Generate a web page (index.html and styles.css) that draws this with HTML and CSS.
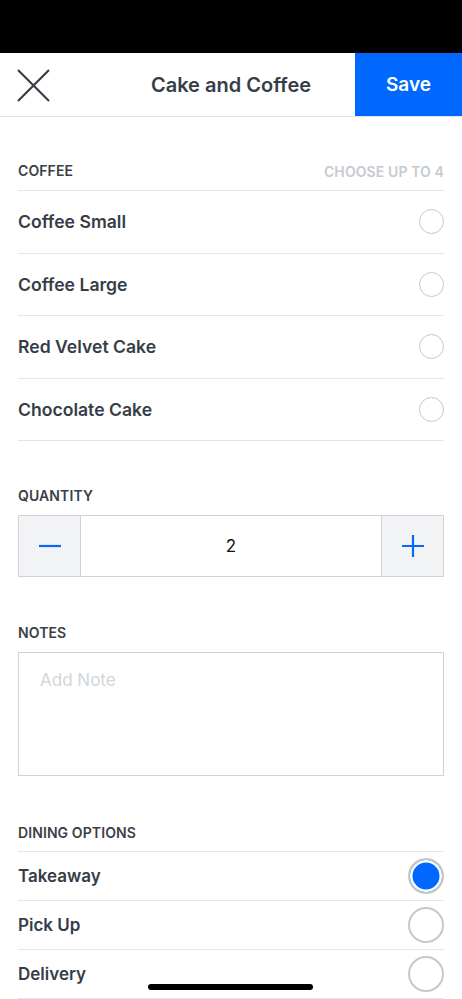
FILE: index.html
```html
<!DOCTYPE html>
<html lang="en">
<head>
<meta charset="utf-8">
<title>Cake and Coffee</title>
<link rel="stylesheet" href="styles.css">
</head>
<body>
<div class="screen">
  <div class="status-bar"></div>
  <header class="nav">
    <button class="close" aria-label="Close">
      <svg width="33" height="33" viewBox="0 0 33 33"><path d="M1 1 L32 32 M32 1 L1 32" stroke="#3a4049" stroke-width="2.2" fill="none"/></svg>
    </button>
    <h1 class="title">Cake and Coffee</h1>
    <button class="save">Save</button>
  </header>

  <main class="content">
    <section class="group group-coffee">
      <div class="group-head">
        <span class="label">COFFEE</span>
        <span class="hint">CHOOSE UP TO 4</span>
      </div>
      <ul class="list">
        <li class="row"><span>Coffee Small</span><span class="radio"></span></li>
        <li class="row"><span>Coffee Large</span><span class="radio"></span></li>
        <li class="row"><span>Red Velvet Cake</span><span class="radio"></span></li>
        <li class="row"><span>Chocolate Cake</span><span class="radio"></span></li>
      </ul>
    </section>

    <section class="group group-qty">
      <div class="label plain">QUANTITY</div>
      <div class="stepper">
        <button class="step" aria-label="Decrease">
          <svg width="22" height="22" viewBox="0 0 22 22"><path d="M0 11 H22" stroke="#0a66f5" stroke-width="2.2"/></svg>
        </button>
        <div class="value">2</div>
        <button class="step" aria-label="Increase">
          <svg width="22" height="22" viewBox="0 0 22 22"><path d="M0 11 H22 M11 0 V22" stroke="#0a66f5" stroke-width="2.2"/></svg>
        </button>
      </div>
    </section>

    <section class="group group-notes">
      <div class="label plain">NOTES</div>
      <div class="notes">Add Note</div>
    </section>

    <section class="group group-dining">
      <div class="label plain dining-head">DINING OPTIONS</div>
      <ul class="list">
        <li class="row small"><span>Takeaway</span><span class="radio big checked"></span></li>
        <li class="row small"><span>Pick Up</span><span class="radio big"></span></li>
        <li class="row small"><span>Delivery</span><span class="radio big"></span></li>
      </ul>
    </section>
  </main>
  <div class="home-indicator"></div>
</div>
</body>
</html>
```

FILE: styles.css
```css
* { box-sizing: border-box; }
html, body { margin: 0; padding: 0; background: #fff; }
body {
  font-family: Inter, "Noto Sans", sans-serif;
  color: #363d47;
  -webkit-font-smoothing: antialiased;
}
.screen {
  position: relative;
  width: 462px;
  height: 999px;
  overflow: hidden;
  background: #fff;
}
.status-bar { height: 53px; background: #000; }

.nav {
  height: 64px;
  display: flex;
  align-items: stretch;
  border-bottom: 1px solid #e1e3e6;
}
.close {
  width: 107px;
  border: 0;
  background: none;
  padding: 0 0 0 17px;
  display: flex;
  align-items: center;
  cursor: pointer;
}
.close svg { display: block; margin-top: 1px; }
.title {
  flex: 1;
  margin: 0;
  text-align: center;
  font-size: 20px;
  font-weight: 600;
  line-height: 64px;
  color: #363d47;
  letter-spacing: 0;
}
.save {
  width: 107px;
  border: 0;
  margin-bottom: 0;
  background: #0068ff;
  color: #fff;
  font-family: inherit;
  font-size: 19px;
  font-weight: 600;
  padding: 0;
  cursor: pointer;
}

.content { padding: 0 18px; }
.group { margin: 0; }
.group-coffee { padding-top: 35px; }
.group-head {
  height: 39px;
  display: flex;
  justify-content: space-between;
  align-items: center;
  border-bottom: 1px solid #e3e5e8;
}
.label {
  font-size: 14px;
  font-weight: 600;
  color: #3a4049;
  letter-spacing: 0.1px;
  line-height: 20px;
}
.hint {
  font-size: 14px;
  font-weight: 600;
  color: #c7cad0;
  letter-spacing: 0.1px;
}
.list { list-style: none; margin: 0; padding: 0; }
.row {
  height: 62.5px;
  display: flex;
  justify-content: space-between;
  align-items: center;
  border-bottom: 1px solid #e3e5e8;
  font-size: 17.6px;
  font-weight: 600;
  color: #363d47;
}
.row.small { height: 49px; font-size: 17px; }
.radio {
  width: 25px;
  height: 25px;
  border-radius: 50%;
  border: 1.5px solid #c5c8cd;
}
.radio.big {
  width: 36px;
  height: 36px;
  border-width: 2px;
}
.radio.checked {
  background: #0068ff;
  box-shadow: inset 0 0 0 2.5px #fff;
  border-color: #c5c8cd;
}

.group-qty { padding-top: 45px; }
.plain { margin-bottom: 9px; }
.stepper {
  height: 62px;
  display: flex;
  border: 1px solid #cfd3d8;
}
.step {
  width: 62px;
  border: 0;
  background: #f2f3f5;
  display: flex;
  align-items: center;
  justify-content: center;
  padding: 0;
}
.step:first-child { border-right: 1px solid #cfd3d8; }
.step:last-child { border-left: 1px solid #cfd3d8; }
.value {
  flex: 1;
  display: flex;
  align-items: center;
  justify-content: center;
  font-size: 17px;
  font-weight: 400;
  color: #111;
}

.group-notes { padding-top: 46px; }
.notes {
  height: 124px;
  border: 1px solid #cfd3d8;
  padding: 17px 21px;
  font-size: 17px;
  line-height: 20px;
  color: #d3d6da;
}

.group-dining { padding-top: 47px; }
.dining-head {
  margin-bottom: 0;
  padding-bottom: 8px;
  border-bottom: 1px solid #e3e5e8;
}

.home-indicator {
  position: absolute;
  left: 148px;
  top: 984px;
  width: 165px;
  height: 6px;
  border-radius: 3px;
  background: #000;
}
```
